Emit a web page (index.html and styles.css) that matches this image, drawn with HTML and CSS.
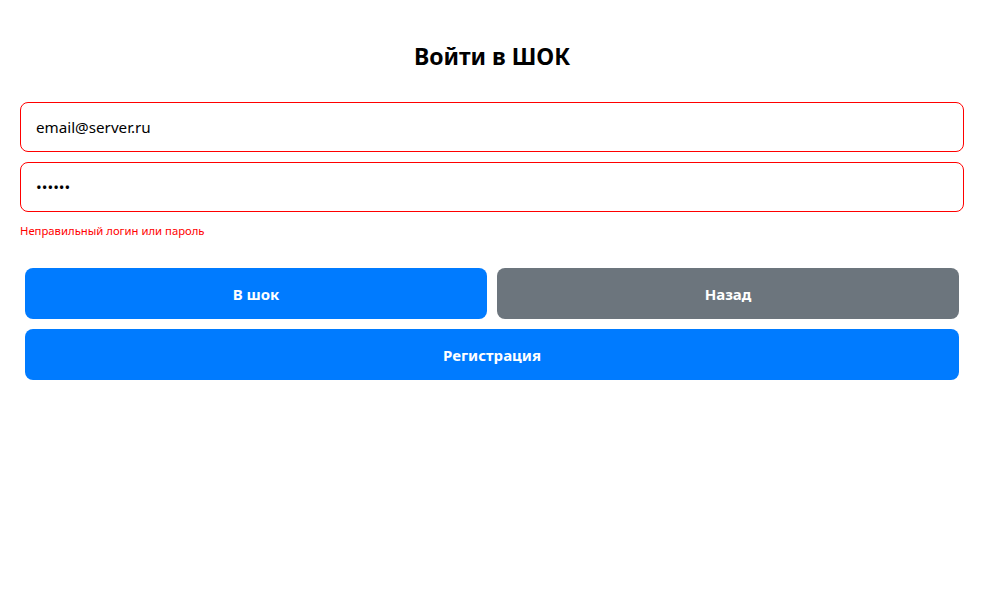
FILE: index.html
```html
<!DOCTYPE html>
<html lang="ru">
<head>
<meta charset="utf-8">
<link rel="stylesheet" href="styles.css">
</head>
<body>
<main class="page">
  <h1 class="title">Войти в ШОК</h1>
  <form class="form">
    <input class="field" type="text" value="email@server.ru">
    <input class="field" type="password" value="123456">
    <p class="error">Неправильный логин или пароль</p>
    <div class="actions">
      <button class="btn btn-primary" type="button">В шок</button>
      <button class="btn btn-secondary" type="button">Назад</button>
      <button class="btn btn-primary btn-wide" type="button">Регистрация</button>
    </div>
  </form>
</main>
</body>
</html>
```

FILE: styles.css
```css
html, body {
  margin: 0;
  padding: 0;
  background: #fff;
  font-family: "Noto Sans", "Open Sans", sans-serif;
  color: #000;
}
.page {
  padding: 38px 20px 0;
}
.title {
  margin: 0 0 28px;
  text-align: center;
  font-size: 23px;
  font-weight: 700;
  line-height: 36px;
}
.form {
  display: flex;
  flex-direction: column;
  gap: 10px;
  margin: 0;
}
.field {
  box-sizing: border-box;
  width: 100%;
  height: 50px;
  border: 1px solid #ff0000;
  border-radius: 8px;
  padding: 0 15px;
  font-family: inherit;
  font-size: 15.2px;
  color: #000;
  outline: none;
}
.error {
  margin: 0 0 18px;
  color: #ff0000;
  font-size: 11.3px;
  line-height: 18px;
}
.actions {
  display: grid;
  grid-template-columns: 1fr 1fr;
  gap: 10px;
  padding: 0 5px;
}
.btn {
  height: 51px;
  border: none;
  border-radius: 8px;
  color: #fff;
  font-family: inherit;
  font-size: 15px;
  font-weight: 700;
  cursor: pointer;
}
.btn-primary { background: #007bff; }
.btn-secondary { background: #6c757d; }
.btn-wide { grid-column: 1 / -1; }
```
